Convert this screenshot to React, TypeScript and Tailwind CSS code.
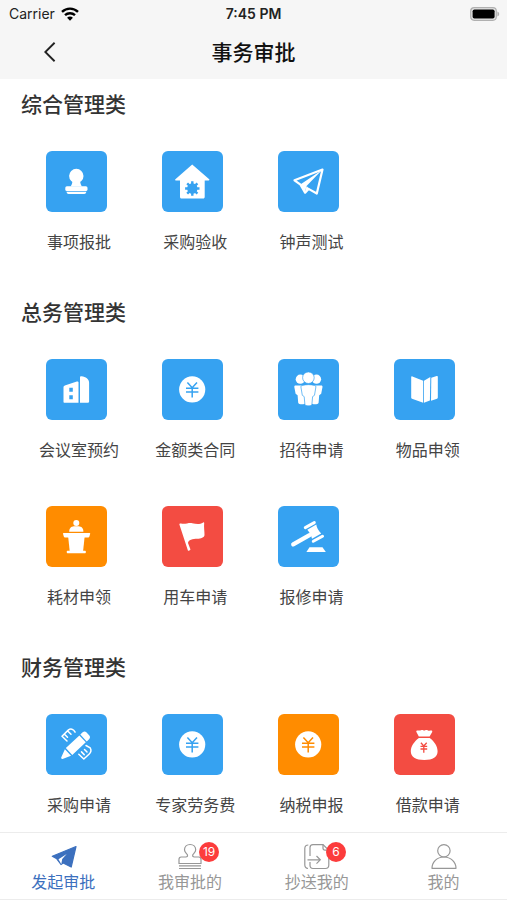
import type { ReactNode } from 'react';

type Color = 'blue' | 'orange' | 'red';

interface Entry {
  label: string;
  color: Color;
  icon: ReactNode;
}

interface Section {
  title: string;
  entries: Entry[];
}

const tileColors: Record<Color, string> = {
  blue: 'bg-[#36a2f1] text-[#36a2f1]',
  orange: 'bg-[#ff8c00] text-[#ff8c00]',
  red: 'bg-[#f34c42] text-[#f34c42]',
};

// Tile icons are white on a 61x61 box, currentColor is the tile colour
const stampIcon = (
  <>
    <circle cx="30.3" cy="25" r="7.2" />
    <path d="M26 29h8.600c-.9 2-.1 4 1.300 6.500H24.700c1.400-2.500 2.200-4.500 1.300-6.500z" />
    <rect x="19.300" y="35.200" width="22.200" height="4.800" rx="1.600" />
    <path d="M20.500 40.800h19.800c-.3 1.500-1 2.200-2 2.200H22.500c-1 0-1.700-.7-2-2.200z" />
  </>
);

const houseIcon = (
  <>
    <path d="M30.200 13.500L47.200 28.300c.5.6.2 1.200-.5 1.200h-4V46c0 .8-.6 1.500-1.500 1.500H19.500c-.9 0-1.500-.7-1.500-1.500V29.500h-4.200c-.8 0-1-.7-.4-1.200z" />
    <circle cx="30.300" cy="37.500" r="5.200" fill="currentColor" />
    <path
      d="M30.300 30.300v14.400M23.100 37.500h14.400M25.200 32.400l10.200 10.200M35.400 32.400L25.200 42.600"
      stroke="currentColor"
      strokeWidth="2.400"
    />
  </>
);

const planeIcon = (
  <>
    <path
      d="M44.500 18.500L16.500 29.300l6 4.400 4.600 8 3.400-3.800 8.300 4.600z"
      fill="none"
      stroke="white"
      strokeWidth="2.200"
      strokeLinejoin="round"
    />
    <path d="M44 19L22.300 33.500l4.800 8.300 1.200-6.500z" />
    <path d="M27 41.500l1.500-6.500 3.200 3z" />
  </>
);

const buildingIcon = (
  <>
    <path d="M17.500 28.500c0-1 .4-1.500 1.300-2l12-4c1-.3 1.700.1 1.700 1v20.200H18.500c-.7 0-1-.4-1-1z" />
    <path d="M34 18.500c0-1 .6-1.300 1.500-1.200 4.200.5 7.600 3 7.600 6.400v18.800c0 .8-.4 1.200-1.200 1.200H34z" />
    <path d="M23.300 28.800h3.500v4h-3.500zM23.300 36.200h3.500v4h-3.500z" fill="currentColor" />
  </>
);

const yenIcon = (
  <>
    <circle cx="30.200" cy="30.400" r="13.100" />
    <path
      d="M25.400 23.400l4.800 5.300 4.800-5.300M30.200 28.700v9.700M24 29.200h12.400M24 33h12.400"
      fill="none"
      stroke="currentColor"
      strokeWidth="1.500"
    />
  </>
);

const peopleIcon = (
  <>
    <circle cx="22.300" cy="20.200" r="4.600" />
    <circle cx="38.500" cy="20.200" r="4.600" />
    <path d="M17.500 26.600h6.500l3.500 9.500v7.700c-.5 2-6.800 2-7.300 0l-.6-7.600-2-1.400-1.300-6.700c-.1-.9.300-1.500 1.200-1.500z" />
    <path d="M43.300 26.600h-6.500l-3.500 9.500v7.700c.5 2 6.800 2 7.300 0l.6-7.600 2-1.400 1.300-6.700c.1-.9-.3-1.500-1.200-1.500z" />
    <circle cx="30.400" cy="18.700" r="5.800" stroke="currentColor" strokeWidth=".7" />
    <path
      d="M24 26.400c4.200-1 8.600-1 12.800 0 .8.200 1.200.8 1.100 1.500l-1.400 8.400-1.900 1.300-.7 7.900c-.2 1.800-6.800 1.800-7 0l-.7-7.900-1.900-1.300-1.400-8.400c-.1-.7.300-1.300 1.100-1.500z"
      stroke="currentColor"
      strokeWidth=".7"
    />
  </>
);

const bookIcon = (
  <>
    <path d="M17.200 18.200c0-.8.500-1 1.200-.7l10.800 4.300v22L18 39.700c-.6-.2-.8-.5-.8-1z" />
    <path d="M30 21.800l6.300-3.700v2.500l-.4 20.800L30 43.800z" />
    <path d="M37.300 18.800l5.400-1.800c.7-.2 1.100.1 1.100.8v20.800c0 .6-.3.900-.8 1.100l-6 2z" />
  </>
);

const podiumIcon = (
  <>
    <circle cx="30.300" cy="17" r="3" />
    <path d="M23.200 25.700c0-3.600 2-5.200 4.700-5.400h4.800c2.700.2 4.700 1.800 4.700 5.400z" />
    <path d="M17.600 27h26c.4 0 .7.400.6.800l-.8 2.600c-.3.700-.7 1-1.500 1H19.300c-.8 0-1.200-.3-1.500-1L17 27.800c-.1-.4.200-.8.600-.8z" />
    <path d="M22.200 31h16.400l-1.500 14H23.700z" />
    <rect x="20.800" y="44.800" width="19" height="2.400" rx=".6" />
  </>
);

const flagIcon = (
  <path d="M17.400 18.600c-.2-.9.800-1.400 1.600-1 4 .9 7.500-1 11.200-.4 4.300.8 7.200 1.500 11-.8.500-.3 1 0 1 .6-.5 4 .4 8.600.3 12-.2 2.800-3.600 3.600-7.200 3.700-4.600.1-9 1.200-9.300 4.200l2.400 6.300c.3.900-1.900 2-2.500 1.200z" />
);

const gavelIcon = (
  <>
    <g stroke="white" strokeLinecap="round">
      <path d="M15.200 38.400L31.500 29.200" strokeWidth="4.200" />
      <path d="M27.300 21.600L36.300 16.600" strokeWidth="3" />
      <path d="M35.300 35.300L44.500 30.200" strokeWidth="3" />
    </g>
    <path d="M29.300 23.800l9-5.200c.3 3.200 2 6.100 4.900 8.800l-9.200 5.300c-.7-3.400-2.500-6.100-4.700-8.900z" />
    <path d="M31.500 41.300h13l3.300 4.700H28.400z" />
  </>
);

const pencilIcon = (
  <>
    <g transform="rotate(-43 30 31)">
      <path d="M20.500 26.300h18.500v9.400H20.500zM40.300 26.300h3.200c1.500 0 2.700 1 2.700 2.500v4.400c0 1.500-1.200 2.500-2.700 2.500h-3.200zM19 26.500v9l-8.300-3.500c-.8-.5-.8-1.500 0-2z" />
    </g>
    <g fill="none" stroke="white" strokeWidth="1.500" strokeLinecap="round" strokeLinejoin="round">
      <path d="M21 27L16 22.200M16 22.200l6.500-6.300c2-1.500 5-1 6.600 2.200M19 20.800l2.500 2.500M22.500 17.700l2.500 2.500" />
      <path d="M40 31.500l4.200 2.300c1.600 2.700.6 4.700-1.200 6.400L37.800 45M37.800 45l-5-4.700M35.500 37.900l2.700 2.700M38.500 35.500l2.500 2.500" />
    </g>
  </>
);

const moneyBagIcon = (
  <>
    <path d="M24.800 22.500l-2.500-4.800c-.2-1.200.8-1.500 2.200-1.200 1.800.5 2.800-.8 4.200-.6.900.1 1 .7 1.700.7s1-.7 1.800-.7c1.500-.1 2.300 1.100 4 .7 1.400-.3 2.400.1 2 1.300l-2.600 4.600z" />
    <path d="M24.900 24h10.800c4.600 3.500 7.900 8.200 7.900 13.300 0 5.600-4.600 8.700-13.300 8.700s-13.500-3.100-13.500-8.700c0-5.100 3.500-9.800 8.100-13.300z" />
    <path
      d="M26.900 28.700l2.900 3.300 2.900-3.300M29.800 32v6.700M26.500 32.400h6.700M26.500 35h6.700"
      fill="none"
      stroke="currentColor"
      strokeWidth="1.300"
    />
  </>
);

const sections: Section[] = [
  {
    title: '综合管理类',
    entries: [
      { label: '事项报批', color: 'blue', icon: stampIcon },
      { label: '采购验收', color: 'blue', icon: houseIcon },
      { label: '钟声测试', color: 'blue', icon: planeIcon },
    ],
  },
  {
    title: '总务管理类',
    entries: [
      { label: '会议室预约', color: 'blue', icon: buildingIcon },
      { label: '金额类合同', color: 'blue', icon: yenIcon },
      { label: '招待申请', color: 'blue', icon: peopleIcon },
      { label: '物品申领', color: 'blue', icon: bookIcon },
      { label: '耗材申领', color: 'orange', icon: podiumIcon },
      { label: '用车申请', color: 'red', icon: flagIcon },
      { label: '报修申请', color: 'blue', icon: gavelIcon },
    ],
  },
  {
    title: '财务管理类',
    entries: [
      { label: '采购申请', color: 'blue', icon: pencilIcon },
      { label: '专家劳务费', color: 'blue', icon: yenIcon },
      { label: '纳税申报', color: 'orange', icon: yenIcon },
      { label: '借款申请', color: 'red', icon: moneyBagIcon },
    ],
  },
];

const tabs = [
  {
    label: '发起审批',
    active: true,
    badge: 0,
    icon: (
      <>
        <path
          d="M27 3.500L3.300 13.200l4.500 2.600L12 21.500l2.200-1.500 8 4z"
          fill="currentColor"
          strokeLinejoin="round"
        />
        <path d="M17.700 11L9.500 16.200l2.800 5 .9-5.200z" fill="white" stroke="none" />
      </>
    ),
  },
  {
    label: '我审批的',
    active: false,
    badge: 19,
    icon: (
      <path d="M3 20.500v-4.200c0-1.500.8-2.300 2.200-2.300h4.600c1.500 0 2-.8 1.600-2.200C10.700 10.300 8.500 9.500 8.500 6.800c0-3 2.400-5.300 5.600-5.300s5.600 2.300 5.600 5.300c0 2.700-2.200 3.500-2.900 5-.4 1.400.1 2.200 1.600 2.200h4.400c1.400 0 2.200.8 2.200 2.300v4.200zM3 22.900h22M3 25.500h22" />
    ),
  },
  {
    label: '抄送我的',
    active: false,
    badge: 6,
    icon: (
      <>
        <path d="M5.300 2C3 2 1.800 3.200 1.800 5.500v16.300c0 2.300 1 3.500 3.200 3.700M7 13V4.500C7 2.500 8 1.600 10 1.600h10l5.800 5.600V22c0 2.200-1.200 3.500-3.400 3.500H10c-2 0-3-1.200-3-3.200V19" />
        <path d="M20 1.600v3.600c0 1.300.7 2 2 2h3.800M4.500 16.800H17M13.500 13l3.800 3.800-3.800 3.800" />
      </>
    ),
  },
  {
    label: '我的',
    active: false,
    badge: 0,
    icon: (
      <>
        <circle cx="13.900" cy="7.800" r="6.200" />
        <path d="M2 25.300c0-6 4.800-11.300 11.900-11.300S26 19.300 26 25.300z" strokeLinejoin="round" />
      </>
    ),
  },
];

function StatusBar() {
  return (
    <div className="relative flex h-7 items-center justify-between pl-[9px] pr-[7px] font-[Inter,sans-serif] text-sm text-[#222]">
      <div className="flex items-center gap-[6px]">
        <span>Carrier</span>
        <svg className="h-[14px] w-[18px]" viewBox="0 0 18 14" fill="none" stroke="black" strokeWidth="2.400">
          <path d="M1 4.900a11.500 11.500 0 0 1 16 0M4 8.200a7.300 7.300 0 0 1 10 0" />
          <path d="M9 13.800L6.100 10.800a4 4 0 0 1 5.800 0z" fill="black" stroke="none" />
        </svg>
      </div>
      <time className="absolute left-1/2 -translate-x-1/2 font-semibold">7:45 PM</time>
      <svg className="h-[14px] w-[30px]" viewBox="0 0 30 14">
        <rect x=".7" y=".7" width="25.600" height="12.600" rx="3.500" fill="#e4e4e4" stroke="#b0b0b0" strokeWidth="1.200" />
        <rect x="2.600" y="2.400" width="22" height="9.200" rx="1.800" fill="black" />
        <path d="M27.400 4.500c2.400.7 2.400 4.300 0 5z" fill="#b0b0b0" />
      </svg>
    </div>
  );
}

function EntryTile({ label, color, icon }: Entry) {
  return (
    <button type="button" className="flex flex-col items-center gap-[19px] pb-[25px] pt-[22px]">
      <span className={`mr-[6px] rounded-md ${tileColors[color]}`}>
        <svg className="block h-[61px] w-[61px]" viewBox="0 0 61 61" fill="white">
          {icon}
        </svg>
      </span>
      <span className="whitespace-nowrap text-base leading-5 text-[#444]">{label}</span>
    </button>
  );
}

export default function App() {
  return (
    <div className="flex h-screen flex-col bg-white font-['Noto_Sans_CJK_SC',sans-serif]">
      <header className="shrink-0 bg-[#f6f6f6]">
        <StatusBar />
        <div className="relative flex h-[51px] items-center justify-center pb-[5px]">
          <button type="button" aria-label="返回" className="absolute left-[42px] top-3 p-[2px]">
            <svg className="h-5 w-3" viewBox="0 0 12 20" fill="none" stroke="#222" strokeWidth="1.900">
              <path d="M10.600 .8L1.300 10l9.300 9.200" />
            </svg>
          </button>
          <h1 className="text-[21px] font-medium leading-7 text-[#111]">事务审批</h1>
        </div>
      </header>

      <main className="min-h-0 flex-1 overflow-y-auto px-[21px] [scrollbar-width:none]">
        {sections.map((section) => (
          <section key={section.title} className="pb-[11px]">
            <h2 className="flex h-[50px] items-center text-[21px] font-medium text-[#333]">{section.title}</h2>
            <div className="grid grid-cols-4">
              {section.entries.map((entry) => (
                <EntryTile key={entry.label} {...entry} />
              ))}
            </div>
          </section>
        ))}
      </main>

      <nav className="grid shrink-0 grid-cols-4 border-y border-[#ececec] bg-white">
        {tabs.map((tab) => (
          <button
            key={tab.label}
            type="button"
            className={`flex flex-col items-center pb-2 pt-[10px] ${tab.active ? 'text-[#3c70be]' : 'text-[#979797]'}`}
          >
            <span className="relative">
              <svg className="block h-7 w-7" viewBox="0 0 28 28" fill="none" stroke="currentColor" strokeWidth="1.200">
                {tab.icon}
              </svg>
              {tab.badge > 0 && (
                <span className="absolute -top-px left-[23px] flex h-5 min-w-5 items-center justify-center rounded-full bg-[#fc3c3c] font-[Inter,sans-serif] text-xs text-white">
                  {tab.badge}
                </span>
              )}
            </span>
            <span className="text-base leading-5">{tab.label}</span>
          </button>
        ))}
      </nav>
    </div>
  );
}
